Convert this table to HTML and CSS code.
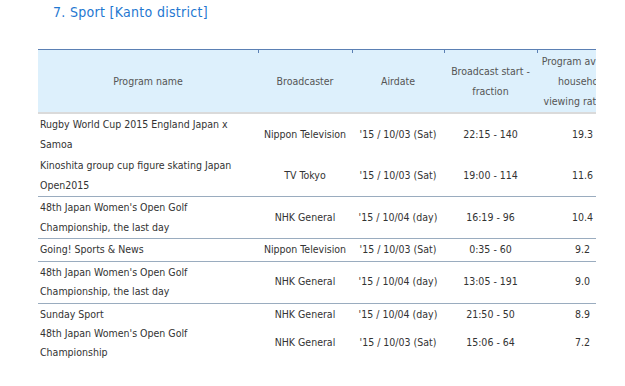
FILE: index.html
```html
<!DOCTYPE html>
<html lang="en">
<head>
    <meta charset="UTF-8">
    <meta name="viewport" content="width=device-width, initial-scale=1.0">
    <title>Sport [Kanto district]</title>
    <link rel="stylesheet" href="styles.css">
</head>
<body>
    <h2 class="section-title">7. Sport [Kanto district]</h2>
    <div class="table-wrap">
        <table class="ratings">
            <colgroup>
                <col class="col-name">
                <col class="col-station">
                <col class="col-date">
                <col class="col-time">
                <col class="col-rate">
            </colgroup>
            <thead>
                <tr>
                    <th>Program name</th>
                    <th>Broadcaster</th>
                    <th>Airdate</th>
                    <th>Broadcast start -<br>fraction</th>
                    <th>Program average<br>household<br>viewing rate (%)</th>
                </tr>
            </thead>
            <tbody>
                <tr>
                    <td class="name">Rugby World Cup 2015 England Japan x Samoa</td>
                    <td>Nippon Television</td>
                    <td>'15 / 10/03 (Sat)</td>
                    <td>22:15 - 140</td>
                    <td>19.3</td>
                </tr>
                <tr class="sep">
                    <td class="name">Kinoshita group cup figure skating Japan Open2015</td>
                    <td>TV Tokyo</td>
                    <td>'15 / 10/03 (Sat)</td>
                    <td>19:00 - 114</td>
                    <td>11.6</td>
                </tr>
                <tr class="sep">
                    <td class="name">48th Japan Women's Open Golf Championship, the last day</td>
                    <td>NHK General</td>
                    <td>'15 / 10/04 (day)</td>
                    <td>16:19 - 96</td>
                    <td>10.4</td>
                </tr>
                <tr class="sep">
                    <td class="name">Going! Sports &amp; News</td>
                    <td>Nippon Television</td>
                    <td>'15 / 10/03 (Sat)</td>
                    <td>0:35 - 60</td>
                    <td>9.2</td>
                </tr>
                <tr class="sep">
                    <td class="name">48th Japan Women's Open Golf Championship, the last day</td>
                    <td>NHK General</td>
                    <td>'15 / 10/04 (day)</td>
                    <td>13:05 - 191</td>
                    <td>9.0</td>
                </tr>
                <tr class="tight">
                    <td class="name">Sunday Sport</td>
                    <td>NHK General</td>
                    <td>'15 / 10/04 (day)</td>
                    <td>21:50 - 50</td>
                    <td>8.9</td>
                </tr>
                <tr>
                    <td class="name">48th Japan Women's Open Golf Championship</td>
                    <td>NHK General</td>
                    <td>'15 / 10/03 (Sat)</td>
                    <td>15:06 - 64</td>
                    <td>7.2</td>
                </tr>
            </tbody>
        </table>
    </div>
</body>
</html>
```

FILE: styles.css
```css
body {
    font-family: 'DejaVu Sans Condensed', 'DejaVu Sans', sans-serif;
    margin: 0;
    background-color: #fff;
    color: #333;
}
.section-title {
    margin: 0;
    padding: 3px 0 0 53px;
    font-size: 14px;
    font-weight: normal;
    line-height: 18px;
    letter-spacing: 0.3px;
    color: #1f78d1;
}
.table-wrap {
    margin: 28px 0 0 38px;
    width: 558px;
    overflow: hidden;
}
.ratings {
    width: 590px;
    table-layout: fixed;
    border-collapse: collapse;
    font-size: 10.5px;
}
.col-name { width: 220px; }
.col-station { width: 94px; }
.col-date { width: 92px; }
.col-time { width: 93px; }
.col-rate { width: 91px; }
.ratings th {
    background-color: #ddf0fc;
    border-top: 1px solid #5b80b4;
    border-bottom: 2px solid #dadada;
    color: #555;
    font-weight: normal;
    line-height: 20px;
    padding: 1px 2px;
    text-align: center;
}
.ratings th + th {
    background-image: linear-gradient(#5b80b4, #5b80b4);
    background-size: 1px 3px;
    background-repeat: no-repeat;
    background-position: 0 0;
}
.ratings td {
    line-height: 19.5px;
    padding: 1px 2px;
    text-align: center;
    white-space: nowrap;
}
.ratings td.name {
    text-align: left;
    white-space: normal;
}
.ratings tr.sep td {
    border-bottom: 1px solid #9aacbf;
}
.ratings tr.tight td {
    line-height: 17px;
    padding: 2px 2px 0;
}
```
